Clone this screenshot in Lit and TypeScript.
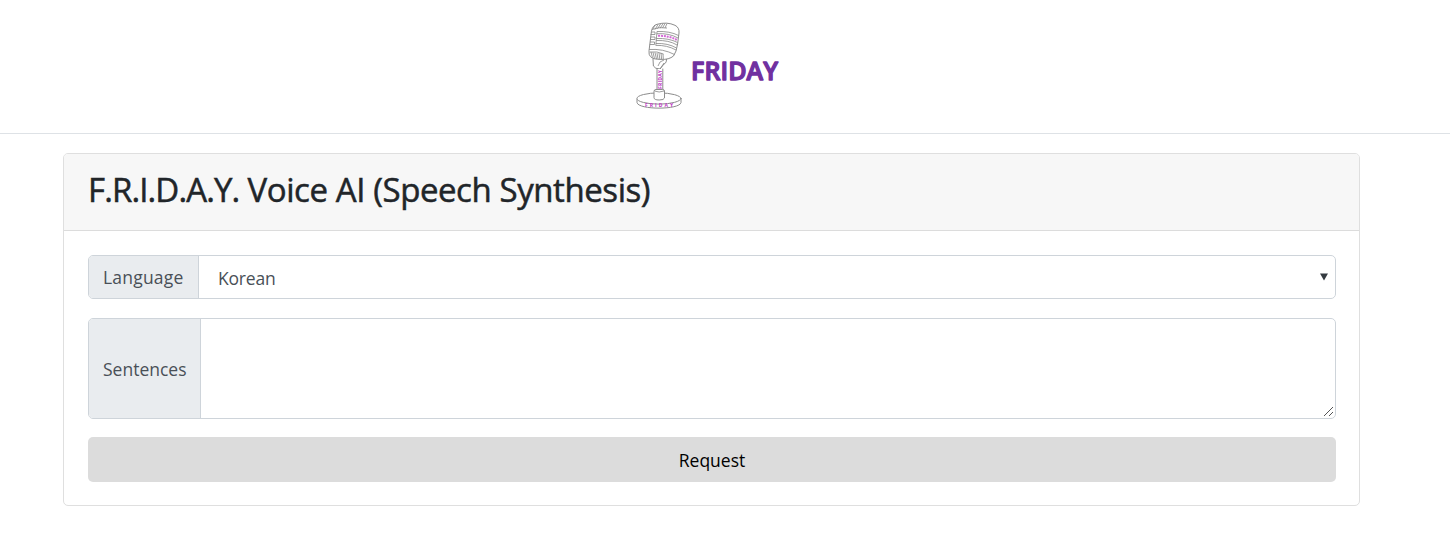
import { LitElement, html, css } from "lit";
import { customElement } from "lit/decorators.js";

@customElement("friday-logo")
class FridayLogo extends LitElement {
  static styles = css`
    :host { display: flex; width: 145px; height: 90px; }
    .mic { width: 48px; height: 90px; flex: none; }
    .name { width: 96px; height: 30px; flex: none; margin: 36px 0 0 8px; overflow: visible; }
    .word {
      font: 600 25px "Open Sans", sans-serif;
      fill: #7030a0;
      stroke: #7030a0;
      stroke-width: 1.3;
      stroke-linejoin: round;
    }
    .line { fill: #fff; stroke: #8c8c8c; stroke-width: 1; stroke-linejoin: round; stroke-linecap: round; }
    .thin { fill: none; stroke: #858585; stroke-width: 0.8; }
    .accent { fill: none; stroke: #d36bd6; stroke-width: 2; stroke-dasharray: 2 0.9; }
    .tiny { font: 700 5px "Open Sans", sans-serif; fill: #bd39c4; }
  `;
  render() {
    return html`
      <svg class="mic" viewBox="0 0 48 90">
        <path class="line" d="M18 39 L18.4 46 Q20 49 25 49 L29 44 Q32 43 31.5 38Z" />
        <path class="thin" d="M23 46 Q24 41 29 40 M25 49 L29 43" />
        <path class="line" d="M22 49 V71 H27.8 V49" />
        <path class="line" d="M2 79 V82.5 C3 90 45 90 46 82.5 V79" />
        <ellipse class="line" cx="24" cy="78.5" rx="22" ry="5.6" />
        <path class="line" d="M19 71 Q19 69.5 21 69.5 H27.5 Q29.5 69.5 29.5 71 V78 Q29 80 24.2 80 Q19 80 19 78Z" />
        <path class="thin" d="M19.5 71 Q24 73 29 71" />
        <path class="line" d="M16.5 11 Q17.5 5.5 22 4.3 Q32 1.5 40 5.3 Q44.5 7.5 44 13 L42.6 24 Q41.5 32 38.5 36 Q34 39.8 26 39.4 Q18 39.5 15.4 36.5 Q13.6 35 14 31Z" />
        <path class="thin" d="M18 9 L20 5 M20 9.5 L23 4.5 M22.5 8.8 L25.5 4 M25 8.4 L28 3.6 M27.5 8 L30 3.5 M30 8 L32 3.5 M17 9.5 Q24 6.5 32 8" />
        <path class="thin" d="M16 12 H20 V14.5 H15.6 M15.6 17 H20 V19.5 H15.2 M15 22 H19.5 V24.5 H14.8" />
        <path class="thin" d="M22 11.5 Q35 11 43.5 15.5 M21.8 13.7 Q34 13 43 18 M21.4 18.5 Q34 18 42.5 22.5 M21.2 20.5 Q34 20 42 25 M21 23.5 Q33 23 41.5 28 M20.8 25.4 Q32 25 41 30 M22 11.5 L20.8 25.4 M14.2 29.5 Q28 28.5 39.5 34.5" />
        <path class="accent" d="M23 15.8 Q34 15.5 42 20" />
        <path class="thin" d="M16 32 L17.5 37.5 M18 32.3 L19.5 38.5 M20 32.6 L21.5 39 M22 33 L23 39 M24 33 L24.8 39 M26 33 L26.6 39 M28 34 L28.3 39 M15 32 Q22 31 28.5 34" />
        <text class="tiny" transform="translate(26.8 69) rotate(-90)" textLength="19">FRIDAY</text>
        <text class="tiny" x="10" y="87.4" textLength="28">FRIDAY</text>
      </svg>
      <svg class="name" viewBox="0 0 96 30"><text class="word" x="0" y="24" textLength="87">FRIDAY</text></svg>
    `;
  }
}

@customElement("app-root")
class AppRoot extends LitElement {
  static styles = css`
    :host {
      display: block;
      height: 552px;
      background: #fff;
      font: 400 18px/27px "Open Sans", sans-serif;
      color: #212529;
    }
    * { box-sizing: border-box; }
    .top { height: 134px; padding: 20px 0 0 635px; border-bottom: 1px solid #dee2e6; }
    .card {
      margin: 19px 90px 0 63px;
      height: 353px;
      border: 1px solid #dfdfdf;
      border-radius: 5px;
      overflow: hidden;
    }
    .head { height: 77px; padding: 16px 24px 15px; background: #f7f7f7; border-bottom: 1px solid #dcdcdc; }
    .title {
      margin: 0;
      font-size: 33px;
      line-height: 40px;
      font-weight: 500;
      letter-spacing: -0.42px;
      white-space: nowrap;
      -webkit-text-stroke: 0.5px #212529;
    }
    .initials { letter-spacing: -0.88px; }
    .body { padding: 24px 23px 0 24px; display: flex; flex-direction: column; }
    .group { display: flex; border: 1px solid #ced4da; border-radius: 5px; overflow: hidden; height: 44px; margin-bottom: 19px; }
    .group.tall { height: 101px; margin-bottom: 18px; }
    .label {
      flex: none;
      width: 110px;
      padding-left: 14px;
      display: flex;
      align-items: center;
      background: #e9ecef;
      border-right: 1px solid #ced4da;
      color: #495057;
    }
    .tall .label { width: 112px; }
    .field { flex: 1; display: flex; align-items: center; justify-content: space-between; padding: 3px 7px 0 19px; color: #495057; }
    .area { flex: 1; display: flex; align-items: flex-end; justify-content: flex-end; padding: 0 1px 1px 0; }
    .arrow { width: 8px; height: 8px; margin-bottom: 3px; fill: #343a40; }
    .grip { width: 11px; height: 11px; fill: none; stroke: #555; stroke-width: 1; }
    .request { height: 45px; border: 0; border-radius: 5px; background: #dcdcdc; color: #000; font: inherit; padding: 1px 0 0; margin: 0; }
    .t1, .t2, .t3, .t4 { font-size: 17.5px; }
    .t1 { letter-spacing: 0.2px; padding-top: 1px; }
    .t2 { letter-spacing: -0.2px; }
    .t3 { padding-top: 1px; }
  `;
  render() {
    return html`
      <header class="top"><friday-logo></friday-logo></header>
      <main class="card">
        <div class="head"><h1 class="title"><span class="initials">F.R.I.D.A.Y.</span> Voice AI (Speech Synthesis)</h1></div>
        <div class="body">
          <div class="group">
            <div class="label"><span class="t1">Language</span></div>
            <div class="field">
              <span class="t2">Korean</span>
              <svg class="arrow" viewBox="0 0 8 8"><path d="M0 .5H8L4 7.5Z" /></svg>
            </div>
          </div>
          <div class="group tall">
            <div class="label"><span class="t3">Sentences</span></div>
            <div class="area">
              <svg class="grip" viewBox="0 0 11 11"><path d="M1 10L10 1M6 10L10 6" /></svg>
            </div>
          </div>
          <button class="request"><span class="t4">Request</span></button>
        </div>
      </main>
    `;
  }
}
